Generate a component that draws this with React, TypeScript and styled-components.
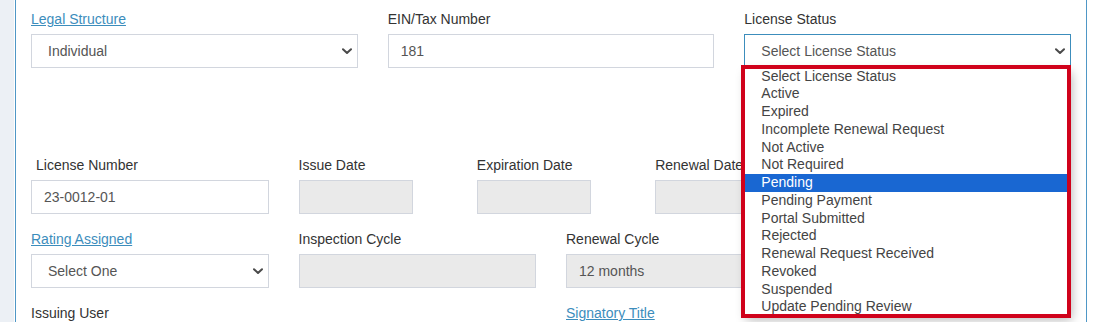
import React from 'react';
import styled, { createGlobalStyle } from 'styled-components';

const GlobalStyle = createGlobalStyle`
  html, body {
    margin: 0;
    padding: 0;
    background: #fff;
  }
  body {
    font-family: "Liberation Sans", Arial, sans-serif;
    font-size: 14px;
    color: #333;
    overflow: hidden;
  }
`;

const Page = styled.div`
  display: flex;
  width: 1093px;
  height: 322px;
  overflow: hidden;
`;

const SideStrip = styled.div`
  flex: 0 0 14px;
  background: #ecf0f5;
`;

const Gutter = styled.div`
  flex: 0 0 1px;
  background: #fff;
`;

const Panel = styled.div`
  flex: 0 0 1072px;
  box-sizing: border-box;
  border-left: 1px solid #4f97c6;
  border-right: 1px solid #4f97c6;
  padding: 9px 15px 0;
`;

const FormRow = styled.div`
  display: grid;
  grid-template-columns: repeat(12, 1fr);
  column-gap: 30px;
`;

const Spacer = styled.div`
  height: 72px;
`;

const Field = styled.div<{ $span: number }>`
  grid-column: span ${({ $span }) => $span};
  margin-bottom: 15px;
  min-width: 0;
`;

const FieldLabel = styled.div<{ $link?: boolean; $indent?: number }>`
  height: 20px;
  line-height: 20px;
  margin-bottom: 5px;
  padding-left: ${({ $indent }) => $indent || 0}px;
  color: ${({ $link }) => ($link ? '#3c8dbc' : '#333')};
  text-decoration: ${({ $link }) => ($link ? 'underline' : 'none')};
  white-space: nowrap;
`;

const ControlWrap = styled.div`
  position: relative;
`;

const TextInput = styled.input<{ $width?: number }>`
  display: block;
  box-sizing: border-box;
  width: ${({ $width }) => ($width ? `${$width}px` : '100%')};
  height: 34px;
  margin: 0;
  padding: 0 12px;
  border: 1px solid #d2d6de;
  border-radius: 0;
  outline: none;
  font-family: inherit;
  font-size: 14px;
  color: #555;
  background: ${({ disabled }) => (disabled ? '#eaeaea' : '#fff')};
  opacity: 1;
  -webkit-text-fill-color: #555;
`;

const SelectBox = styled.div<{ $focused?: boolean }>`
  display: flex;
  align-items: center;
  justify-content: space-between;
  box-sizing: border-box;
  height: 34px;
  padding: 0 5px 0 16px;
  border: 1px solid ${({ $focused }) => ($focused ? '#3c8dbc' : '#d2d6de')};
  background: #fff;
  color: #555;
  white-space: nowrap;
`;

const Chevron = () => (
  <svg width="10" height="7" viewBox="0 0 10 7" aria-hidden="true">
    <path d="M1 1.2 L5 5 L9 1.2" fill="none" stroke="#4a4a4a" strokeWidth="2" strokeLinecap="round" strokeLinejoin="round" />
  </svg>
);

const OptionList = styled.ul`
  position: absolute;
  top: 33.5px;
  left: 0;
  width: 326px;
  margin: 0;
  padding: 0;
  list-style: none;
  background: #fff;
  box-shadow: 2px 4px 10px rgba(0, 0, 0, 0.28);
  z-index: 5;
`;

const OptionItem = styled.li<{ $active?: boolean }>`
  height: 17.75px;
  line-height: 16px;
  padding-left: 17px;
  white-space: nowrap;
  color: ${({ $active }) => ($active ? '#fff' : '#444')};
  background: ${({ $active }) => ($active ? '#1967d2' : 'transparent')};
`;

const Highlight = styled.div`
  position: absolute;
  top: 31px;
  left: -3px;
  width: 330px;
  height: 253px;
  box-sizing: border-box;
  border: 4px solid #d0021b;
  pointer-events: none;
  z-index: 6;
`;

const statuses = [
  'Select License Status',
  'Active',
  'Expired',
  'Incomplete Renewal Request',
  'Not Active',
  'Not Required',
  'Pending',
  'Pending Payment',
  'Portal Submitted',
  'Rejected',
  'Renewal Request Received',
  'Revoked',
  'Suspended',
  'Update Pending Review',
];

export default function App() {
  return (
    <>
      <GlobalStyle />
      <Page>
        <SideStrip />
        <Gutter />
        <Panel>
          <FormRow>
            <Field $span={4}>
              <FieldLabel $link>Legal Structure</FieldLabel>
              <SelectBox>
                <span>Individual</span>
                <Chevron />
              </SelectBox>
            </Field>
            <Field $span={4}>
              <FieldLabel>EIN/Tax Number</FieldLabel>
              <TextInput readOnly defaultValue="181" />
            </Field>
            <Field $span={4}>
              <FieldLabel>License Status</FieldLabel>
              <ControlWrap>
                <SelectBox $focused>
                  <span>Select License Status</span>
                  <Chevron />
                </SelectBox>
                <OptionList>
                  {statuses.map((s) => (
                    <OptionItem key={s} $active={s === 'Pending'}>
                      {s}
                    </OptionItem>
                  ))}
                </OptionList>
                <Highlight />
              </ControlWrap>
            </Field>
          </FormRow>
          <Spacer />
          <FormRow>
            <Field $span={3}>
              <FieldLabel $indent={5}>License Number</FieldLabel>
              <TextInput readOnly defaultValue="23-0012-01" />
            </Field>
            <Field $span={2}>
              <FieldLabel>Issue Date</FieldLabel>
              <TextInput disabled $width={114} />
            </Field>
            <Field $span={2}>
              <FieldLabel>Expiration Date</FieldLabel>
              <TextInput disabled $width={114} />
            </Field>
            <Field $span={2}>
              <FieldLabel>Renewal Date</FieldLabel>
              <TextInput disabled $width={114} />
            </Field>
          </FormRow>
          <FormRow>
            <Field $span={3}>
              <FieldLabel $link>Rating Assigned</FieldLabel>
              <SelectBox>
                <span>Select One</span>
                <Chevron />
              </SelectBox>
            </Field>
            <Field $span={3}>
              <FieldLabel>Inspection Cycle</FieldLabel>
              <TextInput disabled />
            </Field>
            <Field $span={3}>
              <FieldLabel>Renewal Cycle</FieldLabel>
              <TextInput disabled defaultValue="12 months" />
            </Field>
          </FormRow>
          <FormRow>
            <Field $span={6}>
              <FieldLabel>Issuing User</FieldLabel>
            </Field>
            <Field $span={3}>
              <FieldLabel $link>Signatory Title</FieldLabel>
            </Field>
          </FormRow>
        </Panel>
      </Page>
    </>
  );
}
